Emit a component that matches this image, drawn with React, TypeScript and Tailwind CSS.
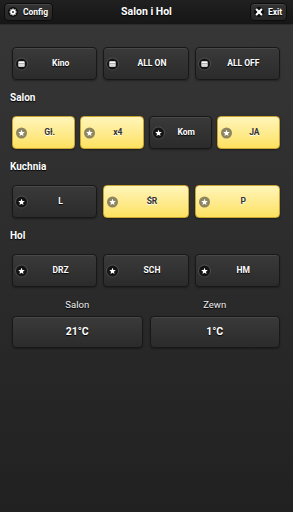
import React from "react";

type Kind = "bars" | "star";

const Star = () => (
  <svg viewBox="0 0 10 10" className="w-[7px] h-[7px]">
    <polygon
      points="5,0.4 6.3,3.5 9.6,3.7 7.1,5.9 7.9,9.3 5,7.5 2.1,9.3 2.9,5.9 0.4,3.7 3.7,3.5"
      fill="#fff"
    />
  </svg>
);

const Bars = () => (
  <svg viewBox="0 0 10 10" className="w-[7px] h-[7px]">
    <rect x="0.5" y="1" width="9" height="8" rx="1" fill="#fff" />
    <rect x="0.5" y="4" width="9" height="1.4" fill="#8a8a8a" />
    <rect x="0.5" y="6.4" width="9" height="0.8" fill="#bbbbbb" />
  </svg>
);

const Btn = ({ label, icon, on }: { label: string; icon?: Kind; on?: boolean }) => {
  return (
    <div
      className={
        on
          ? "relative h-[33px] rounded-[4px] border border-[#c9a432] bg-gradient-to-b from-[#fff5b8] to-[#fde15e] shadow-[0_1px_2px_rgba(0,0,0,0.4)] flex items-center justify-center pl-[22px] pr-[10px] text-[8.5px] font-bold text-[#333] [text-shadow:0_1px_0_#fff]"
          : "relative h-[33px] rounded-[4px] border border-[#181818] bg-gradient-to-b from-[#3a3a3a] to-[#2b2b2b] shadow-[inset_0_1px_0_rgba(255,255,255,0.08),0_1px_2px_rgba(0,0,0,0.35)] flex items-center justify-center pl-[22px] pr-[10px] text-[8.5px] font-bold text-white [text-shadow:0_1px_1px_#000]"
      }
    >
      {icon && (
        <span
          className={
            on
              ? "absolute left-[3px] top-1/2 -translate-y-1/2 w-[11px] h-[11px] rounded-full bg-[#8d8560] flex items-center justify-center"
              : "absolute left-[3px] top-1/2 -translate-y-1/2 w-[11px] h-[11px] rounded-full bg-[#141414] shadow-[0_0_0_1px_rgba(255,255,255,0.12)] flex items-center justify-center"
          }
        >
          {icon === "star" ? <Star /> : <Bars />}
        </span>
      )}
      {label}
    </div>
  );
};

const Section = ({ title }: { title: string }) => (
  <div className="mt-3 mb-3 leading-[12px] text-[10px] font-bold text-white [text-shadow:0_1px_1px_#000] -ml-[2px]">
    {title}
  </div>
);

const TempBox = ({ label, value }: { label: string; value: string }) => (
  <div className="flex flex-col">
    <div className="text-center text-[9.5px] leading-[12px] mb-[5px] text-[#eee] [text-shadow:0_1px_1px_#000]">{label}</div>
    <div className="h-[32px] rounded-[4px] border border-[#181818] bg-gradient-to-b from-[#3a3a3a] to-[#2b2b2b] shadow-[inset_0_1px_0_rgba(255,255,255,0.08),0_1px_2px_rgba(0,0,0,0.35)] flex items-center justify-center text-[10.5px] font-bold [text-shadow:0_1px_1px_#000]">
      {value}
    </div>
  </div>
);

export default function App() {
  return (
    <div
      className="w-[293px] min-h-[512px] bg-gradient-to-b from-[#373737] to-[#212121] text-white"
      style={{ fontFamily: 'Roboto, "Liberation Sans", Arial, sans-serif' }}
    >
      {/* HEADER */}
      <div className="relative h-[25px] bg-gradient-to-b from-[#202020] to-[#161616] border-b border-[#2a2a2a] flex items-center justify-between pl-[4px] pr-[6px]">
        <div className="h-[18px] w-[49px] rounded-[4px] border border-[#0c0c0c] bg-gradient-to-b from-[#333] to-[#262626] shadow-[inset_0_1px_0_rgba(255,255,255,0.1)] flex items-center gap-[5px] pl-[3px] text-[8.5px] font-bold [text-shadow:0_1px_1px_#000]">
          <span className="w-[10px] h-[10px] rounded-full bg-[#0e0e0e] flex items-center justify-center">
            <svg viewBox="0 0 10 10" className="w-[8px] h-[8px]">
              <g fill="#fff">
                <circle cx="5" cy="5" r="3.2" />
                <rect x="4.2" y="0.6" width="1.6" height="8.8" />
                <rect x="0.6" y="4.2" width="8.8" height="1.6" />
                <rect x="4.2" y="0.6" width="1.6" height="8.8" transform="rotate(45 5 5)" />
                <rect x="4.2" y="0.6" width="1.6" height="8.8" transform="rotate(-45 5 5)" />
              </g>
              <circle cx="5" cy="5" r="1.2" fill="#222" />
            </svg>
          </span>
          Config
        </div>
        <div className="absolute left-0 right-0 text-center text-[10.5px] font-bold [text-shadow:0_1px_1px_#000] pointer-events-none">
          Salon i Hol
        </div>
        <div className="h-[18px] w-[37px] rounded-[4px] border border-[#0c0c0c] bg-gradient-to-b from-[#333] to-[#262626] shadow-[inset_0_1px_0_rgba(255,255,255,0.1)] flex items-center gap-[4px] pl-[3px] text-[8.5px] font-bold [text-shadow:0_1px_1px_#000]">
          <span className="w-[10px] h-[10px] rounded-full bg-[#0e0e0e] flex items-center justify-center">
            <svg viewBox="0 0 10 10" className="w-[8px] h-[8px]">
              <path d="M2 2 L8 8 M8 2 L2 8" stroke="#fff" strokeWidth="2.6" strokeLinecap="round" />
            </svg>
          </span>
          Exit
        </div>
      </div>

      {/* CONTENT */}
      <div className="pl-[12px] pr-[13px] pt-[22px]">
        <div className="grid grid-cols-3 gap-[6px]">
          <Btn label="Kino" icon="bars" />
          <Btn label="ALL ON" icon="bars" />
          <Btn label="ALL OFF" icon="bars" />
        </div>

        <Section title="Salon" />
        <div className="grid grid-cols-4 gap-[5px]">
          <Btn label="Gł." icon="star" on />
          <Btn label="x4" icon="star" on />
          <Btn label="Kom" icon="star" />
          <Btn label="JA" icon="star" on />
        </div>

        <Section title="Kuchnia" />
        <div className="grid grid-cols-3 gap-[6px]">
          <Btn label="L" icon="star" />
          <Btn label="ŚR" icon="star" on />
          <Btn label="P" icon="star" on />
        </div>

        <Section title="Hol" />
        <div className="grid grid-cols-3 gap-[6px]">
          <Btn label="DRZ" icon="star" />
          <Btn label="SCH" icon="star" />
          <Btn label="HM" icon="star" />
        </div>

        {/* TEMPERATURES */}
        <div className="grid grid-cols-2 gap-[7px] mt-[12px]">
          <TempBox label="Salon" value="21°C" />
          <TempBox label="Zewn" value="1°C" />
        </div>
      </div>
    </div>
  );
}
